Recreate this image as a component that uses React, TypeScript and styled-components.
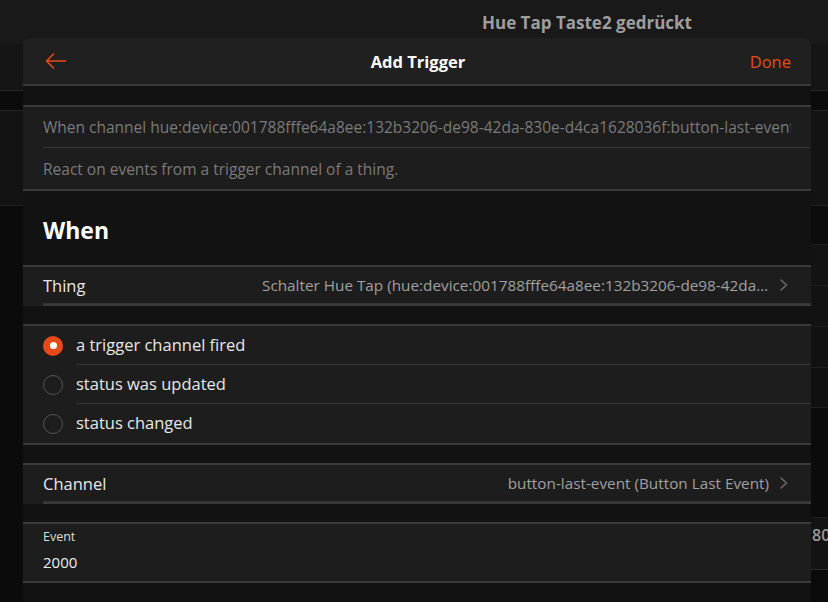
import React from "react";
import styled, { createGlobalStyle } from "styled-components";

const ORANGE = "#e64a19";

const GlobalStyle = createGlobalStyle`
  html, body { margin: 0; padding: 0; background: #0b0b0b; }
  body {
    font-family: "Open Sans", "Noto Sans", sans-serif;
    -webkit-font-smoothing: antialiased;
  }
  * { box-sizing: border-box; }
`;

const Screen = styled.div`
  position: relative;
  width: 828px;
  height: 602px;
  overflow: hidden;
  background: #0b0b0b;
`;

/* ---------- page behind the sheet ---------- */
const BackPage = styled.div`
  display: flex;
  flex-direction: column;
`;

const BgNavbar = styled.div`
  height: 44px;
  background: #191919;
  display: flex;
  align-items: center;
  justify-content: center;
  padding-left: 346px;
`;

const BgTitle = styled.div`
  font-size: 17px;
  font-weight: 700;
  color: #9e9e9e;
`;

const BgBand = styled.div<{ $h: number; $bg: string; $line?: string }>`
  height: ${(p) => p.$h}px;
  background: ${(p) => p.$bg};
  border-bottom: 1px solid ${(p) => p.$line ?? "#222"};
`;

const BgList = styled.div`
  margin-left: 100px;
  display: flex;
  flex-direction: column;
`;

const BgRow = styled.div<{ $h: number; $bg: string; $line?: string }>`
  height: ${(p) => p.$h}px;
  background: ${(p) => p.$bg};
  border-bottom: 1px solid ${(p) => p.$line ?? "#202020"};
  padding: 6px 0 0 712px;
  font-size: 16px;
  line-height: 22px;
  font-weight: 600;
  color: #9a9a9a;
  white-space: nowrap;
`;

/* ---------- sheet ---------- */
const Sheet = styled.div`
  position: absolute;
  left: 23px;
  top: 38px;
  width: 788px;
  height: 580px;
  background: #121212;
  border-radius: 6px 6px 0 0;
  overflow: hidden;
  display: flex;
  flex-direction: column;
`;

const Header = styled.div`
  height: 48px;
  flex: none;
  background: #202020;
  border-bottom: 2px solid #3a3a3a;
  display: grid;
  grid-template-columns: 1fr auto 1fr;
  align-items: center;
  padding: 0 20px 0 22px;
`;

const BackButton = styled.button`
  justify-self: start;
  background: none;
  border: none;
  padding: 0;
  display: flex;
  align-items: center;
  cursor: pointer;
`;

const HeaderTitle = styled.div`
  font-size: 16.5px;
  font-weight: 700;
  color: #ffffff;
`;

const DoneButton = styled.button`
  justify-self: end;
  background: none;
  border: none;
  padding: 0;
  font-family: inherit;
  font-size: 16.5px;
  color: ${ORANGE};
  cursor: pointer;
`;

const List = styled.div<{ $mt: number; $inset?: boolean }>`
  flex: none;
  margin-top: ${(p) => p.$mt}px;
  background: #1d1d1d;
  border-top: 2px solid #3a3a3a;
  border-bottom: ${(p) => (p.$inset ? "none" : "2px solid #3a3a3a")};
`;

const InsetRule = styled.div`
  height: 2px;
  margin-left: 20px;
  background: #3a3a3a;
`;

const RowInner = styled.div<{ $gap?: number; $pr?: number }>`
  flex: 1;
  min-width: 0;
  display: flex;
  align-items: center;
  margin-left: ${(p) => p.$gap ?? 0}px;
  padding-right: ${(p) => p.$pr ?? 20}px;
  border-bottom: 1px solid #333333;
`;

const Row = styled.div<{ $h: number }>`
  display: flex;
  align-items: stretch;
  padding-left: 20px;
  height: ${(p) => p.$h}px;
  &:last-child ${RowInner} {
    border-bottom: none;
  }
`;

const InfoText = styled.div`
  font-size: 15.5px;
  color: #7a7a7a;
  white-space: nowrap;
  overflow: hidden;
`;

const BlockTitle = styled.h2`
  margin: 0;
  padding: 24px 20px 20px;
  font-size: 23px;
  line-height: 30px;
  font-weight: 700;
  color: #ffffff;
  flex: none;
`;

const Label = styled.div`
  font-size: 16.5px;
  color: #e8e8e8;
  white-space: nowrap;
`;

const Value = styled.div<{ $max?: number }>`
  margin-left: auto;
  font-size: 15.3px;
  color: #a0a0a0;
  white-space: nowrap;
  overflow: hidden;
  text-overflow: ellipsis;
  max-width: ${(p) => p.$max ?? 600}px;
`;

const ChevronBox = styled.span`
  flex: none;
  margin-left: 11px;
  display: flex;
  align-items: center;
`;

const RadioMark = styled.span<{ $checked?: boolean }>`
  flex: none;
  align-self: center;
  width: 20px;
  height: 20px;
  border-radius: 50%;
  border: ${(p) => (p.$checked ? "none" : "1.5px solid #555")};
  background: ${(p) => (p.$checked ? ORANGE : "transparent")};
  display: flex;
  align-items: center;
  justify-content: center;
  &::after {
    content: "";
    display: ${(p) => (p.$checked ? "block" : "none")};
    width: 7px;
    height: 7px;
    border-radius: 50%;
    background: #fff;
  }
`;

const RadioLabel = styled(Label)`
  margin-top: -2px;
`;

const FieldInner = styled(RowInner)`
  flex-direction: column;
  align-items: flex-start;
  justify-content: flex-start;
  padding-top: 5px;
  gap: 7px;
`;

const FieldLabel = styled.div`
  font-size: 12.5px;
  line-height: 16px;
  color: #dddddd;
`;

const FieldValue = styled.div`
  font-size: 15px;
  line-height: 20px;
  color: #eeeeee;
`;

const BackArrow = () => (
  <svg width="21" height="16" viewBox="0 0 21 16" fill="none">
    <path d="M1.5 8H20.5M8.5 1L1.5 8L8.5 15" stroke={ORANGE} strokeWidth="1.6" strokeLinecap="round" strokeLinejoin="round" />
  </svg>
);

const Chevron = () => (
  <ChevronBox>
    <svg width="8" height="12" viewBox="0 0 8 12" fill="none">
      <path d="M1 1L6.5 6L1 11" stroke="#6a6a6a" strokeWidth="1.6" strokeLinecap="round" strokeLinejoin="round" />
    </svg>
  </ChevronBox>
);

const options = [
  { label: "a trigger channel fired", checked: true },
  { label: "status was updated", checked: false },
  { label: "status changed", checked: false },
];

export default function App() {
  return (
    <>
      <GlobalStyle />
      <Screen>
        <BackPage>
          <BgNavbar>
            <BgTitle>Hue Tap Taste2 gedrückt</BgTitle>
          </BgNavbar>
          <BgBand $h={47} $bg="#151515" $line="#262626" />
          <BgBand $h={20} $bg="#0b0b0b" />
          <BgBand $h={95} $bg="#131313" />
          <BgList>
            <BgRow $h={39} $bg="#0c0c0c" />
            <BgRow $h={41} $bg="#131313" />
            <BgRow $h={41} $bg="#121212" />
            <BgRow $h={41} $bg="#111111" />
            <BgRow $h={40} $bg="#101010" />
            <BgRow $h={110} $bg="#0b0b0b" />
            <BgRow $h={52} $bg="#131313" $line="#2c2c2c">80</BgRow>
          </BgList>
        </BackPage>

        <Sheet>
          <Header>
            <BackButton aria-label="Back">
              <BackArrow />
            </BackButton>
            <HeaderTitle>Add Trigger</HeaderTitle>
            <DoneButton>Done</DoneButton>
          </Header>

          <List $mt={19}>
            <Row $h={41}>
              <RowInner>
                <InfoText>
                  When channel hue:device:001788fffe64a8ee:132b3206-de98-42da-830e-d4ca1628036f:button-last-event
                </InfoText>
              </RowInner>
            </Row>
            <Row $h={41}>
              <RowInner>
                <InfoText>React on events from a trigger channel of a thing.</InfoText>
              </RowInner>
            </Row>
          </List>

          <BlockTitle>When</BlockTitle>

          <List $mt={0} $inset>
            <Row $h={37}>
              <RowInner $pr={23}>
                <Label>Thing</Label>
                <Value $max={507}>
                  Schalter Hue Tap (hue:device:001788fffe64a8ee:132b3206-de98-42da-830e-d4ca1628036f)
                </Value>
                <Chevron />
              </RowInner>
            </Row>
            <InsetRule />
          </List>

          <List $mt={18}>
            {options.map((o) => (
              <Row $h={39} key={o.label}>
                <RadioMark $checked={o.checked} />
                <RowInner $gap={13}>
                  <RadioLabel>{o.label}</RadioLabel>
                </RowInner>
              </Row>
            ))}
          </List>

          <List $mt={18} $inset>
            <Row $h={37}>
              <RowInner $pr={23}>
                <Label>Channel</Label>
                <Value>button-last-event (Button Last Event)</Value>
                <Chevron />
              </RowInner>
            </Row>
            <InsetRule />
          </List>

          <List $mt={18}>
            <Row $h={57}>
              <FieldInner>
                <FieldLabel>Event</FieldLabel>
                <FieldValue>2000</FieldValue>
              </FieldInner>
            </Row>
          </List>
        </Sheet>
      </Screen>
    </>
  );
}
